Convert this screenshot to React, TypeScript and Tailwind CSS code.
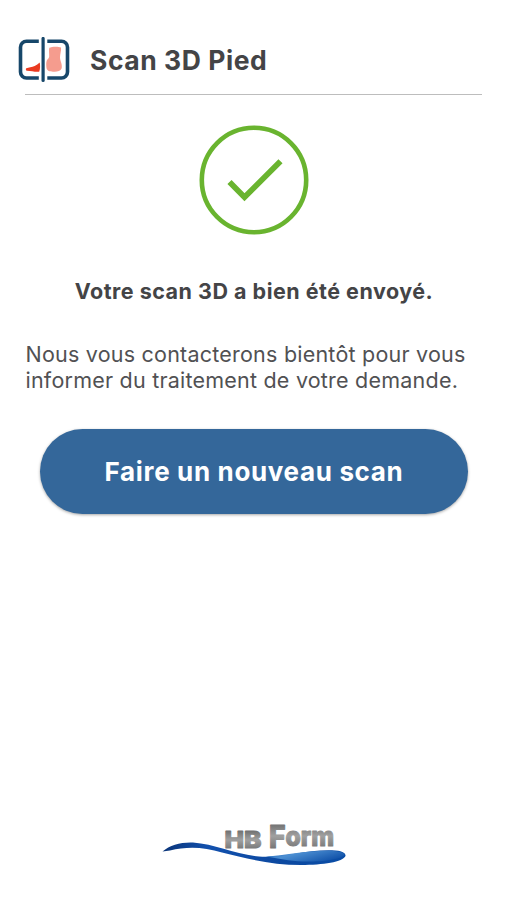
import React from 'react';

const FootScanIcon: React.FC = () => (
  <svg viewBox="0 0 52 46" className="w-[52px] h-[46px] shrink-0" fill="none">
    <path d="M20.800 4.200H8.500A6 6 0 0 0 2.500 10.200V35A6 6 0 0 0 8.500 41H20.800" stroke="#17476a" strokeWidth="3.6" />
    <path d="M29.300 4.200H43.500A6 6 0 0 1 49.500 10.200V35A6 6 0 0 1 43.500 41H29.300" stroke="#17476a" strokeWidth="3.6" />
    <path d="M25.100 1.500V43.500" stroke="#17476a" strokeWidth="3.2" strokeLinecap="round" />
    <path d="M21.700 25.500C20 26.700 18.500 28.200 16.700 29C14 30.300 10.500 30.500 8.300 31.300C7.600 32 7.700 33.300 8.700 33.700C13 33.600 17 35.300 21.200 34.700C22.300 32 22.300 28.500 21.700 25.500Z" fill="#ea3a20" />
    <path d="M31.300 10.800C33.500 9.600 40 9.200 43 10.500C43.500 13.500 42 17 42 20.500C42.200 24.500 44.500 27 43.700 31.300C42.500 34.500 38.500 35 35 34.700C32 34.500 29 34 28.500 31C28.200 28.500 28 25.500 28.800 23.500C29.500 22 31 21.500 31.200 19.500C31.300 16.500 30.600 13.500 31.300 10.800Z" fill="#f59c8e" />
  </svg>
);

const SuccessIcon: React.FC = () => (
  <svg viewBox="0 0 110 110" className="w-[110px] h-[110px]" fill="none" stroke="#69b42f">
    <circle cx="55" cy="55" r="52.2" strokeWidth="4.600" />
    <path d="M30.500 57L45.500 72.200L81.500 36.300" strokeWidth="5.800" />
  </svg>
);

const HBFormLogo: React.FC = () => (
  <svg viewBox="0 0 200 60" className="w-[200px] h-[60px]">
    <defs>
      <linearGradient id="metal" x1="0" y1="0" x2="0" y2="1">
        <stop offset="0.1" stopColor="#666666" />
        <stop offset="0.5" stopColor="#a0a0a0" />
        <stop offset="0.9" stopColor="#6e6e6e" />
      </linearGradient>
      <linearGradient id="wave" x1="0" y1="0" x2="1" y2="0">
        <stop offset="0" stopColor="#0a3478" />
        <stop offset="0.25" stopColor="#1250ad" />
        <stop offset="0.65" stopColor="#0c49a0" />
        <stop offset="1" stopColor="#0a4da6" />
      </linearGradient>
      <linearGradient id="tail" x1="0" y1="0" x2="1" y2="0.5">
        <stop offset="0" stopColor="#1558b0" />
        <stop offset="0.4" stopColor="#4c8fd2" />
        <stop offset="1" stopColor="#1455ab" />
      </linearGradient>
    </defs>
    <g fontFamily="Inter, sans-serif" fontWeight="800" fill="url(#metal)" stroke="url(#metal)" strokeWidth="1.2" strokeLinejoin="round">
      <text x="69.500" y="33" fontSize="23" textLength="37" lengthAdjust="spacingAndGlyphs">HB</text>
      <text x="114" y="32.500" fontSize="31" textLength="65" lengthAdjust="spacingAndGlyphs">
        F<tspan dy="-1.500" fontSize="27">orm</tspan>
      </text>
    </g>
    <path d="M7.500 36.500C15 30 26 27 38 27.500C60 29 79 39 104 41.500C130 43 150 34.500 177 35.300C187 35.500 191 38 190.500 41C188 47 168 50 146 50C117 50 91 43.500 67 37.500C48 31.500 31 31.500 15 35.500Z" fill="url(#wave)" />
    <path d="M111 41.500C130 40.500 150 35.500 175 35.800C185 36 190 38 189.500 40C185 45 164 47 148 46.500C134 46 123 43.500 111 41.500Z" fill="url(#tail)" />
  </svg>
);

const App: React.FC = () => {
  return (
    <div className="h-screen bg-white flex flex-col font-['Inter',sans-serif] text-[#444446] overflow-hidden">
      <header className="flex items-center gap-[20px] h-[94px] pl-[18px] pt-[26px] shrink-0">
        <FootScanIcon />
        <h1 className="text-[26.500px] leading-8 font-bold tracking-[0.55px] whitespace-nowrap">Scan 3D Pied</h1>
      </header>
      <div className="ml-[25px] mr-[25px] h-px shrink-0 bg-[#bdbdbd]" />

      <main className="flex flex-col">
        <div className="mt-[30px] flex justify-center">
          <SuccessIcon />
        </div>
        <p className="mt-[42px] pl-px text-center text-[21.500px] leading-[28px] font-bold tracking-[0.5px] whitespace-nowrap">
          Votre scan 3D a bien été envoyé.
        </p>
        <p className="mt-[37px] ml-[25.500px] text-[21.500px] leading-[25.500px] tracking-[0.22px] text-[#515153] whitespace-nowrap">
          Nous vous contacterons bientôt pour vous
          <br />
          informer du traitement de votre demande.
        </p>
        <button className="mt-[36px] ml-[40px] mr-[39px] h-[85px] rounded-full bg-[#34679a] text-white text-[26px] font-bold tracking-[0.65px] shadow-[0_1px_3px_rgba(0,0,0,0.35)] whitespace-nowrap">
          Faire un nouveau scan
        </button>
      </main>

      <footer className="mt-auto mb-[25px] ml-[155px]">
        <HBFormLogo />
      </footer>
    </div>
  );
};

export default App;
